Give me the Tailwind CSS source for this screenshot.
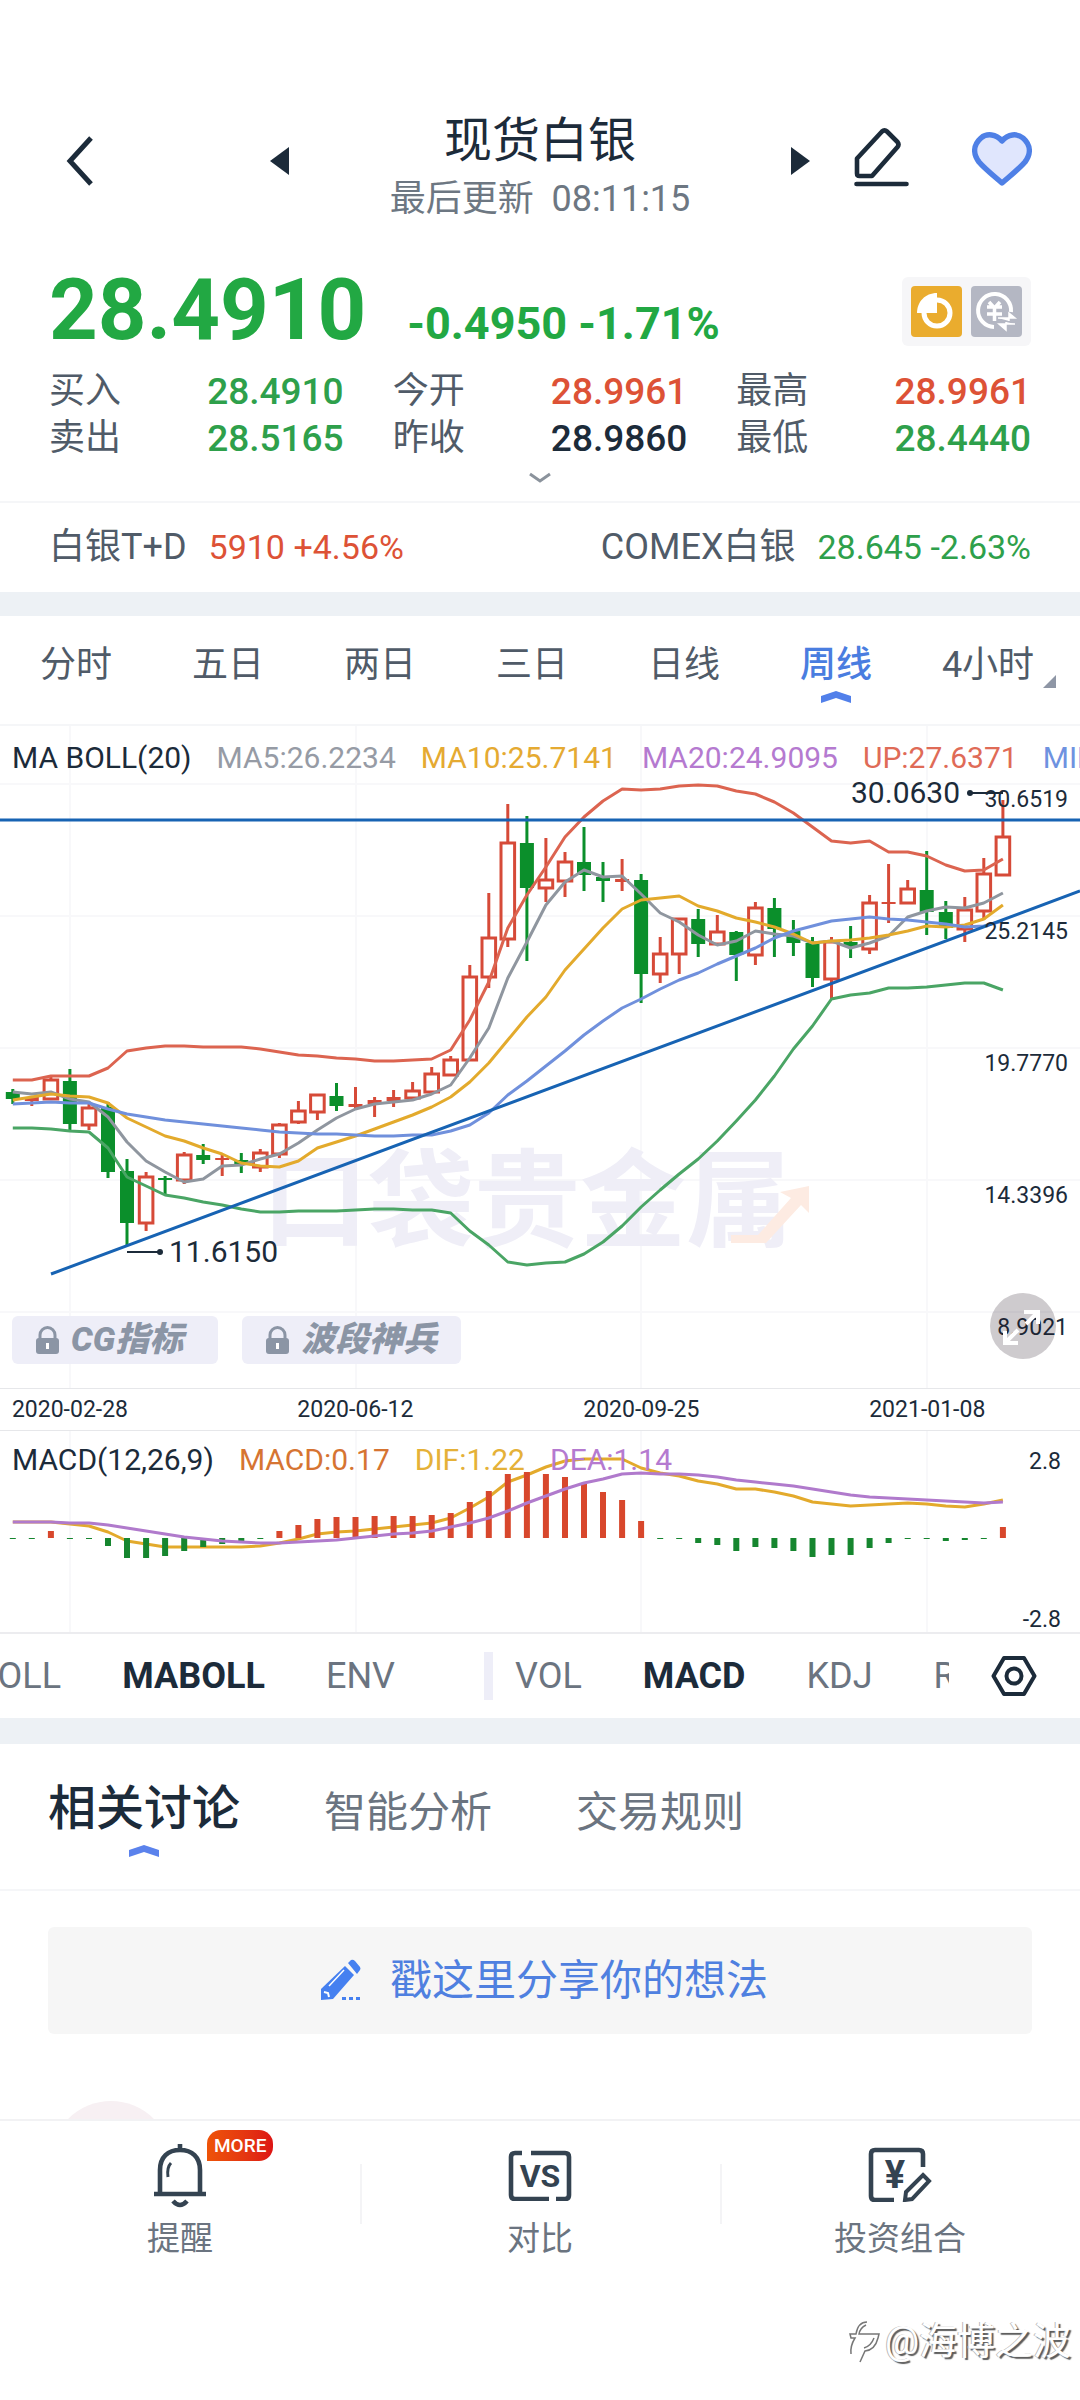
<!DOCTYPE html>
<html lang="zh-CN">
  <head>
    <meta charset="UTF-8" />
    <meta name="viewport" content="width=device-width, initial-scale=1.0" />
    <title>现货白银</title>
    <script src="https://cdn.jsdelivr.net/npm/@tailwindcss/browser@4"></script>
  </head>

  <body
    class="flex min-h-screen flex-col bg-white font-['Roboto','Noto_Sans_CJK_SC',sans-serif] text-[#1c2b3a]"
  >
    <header class="grid grid-cols-[1fr_502px_1fr] items-center pt-[101px]">
      <div class="flex items-center justify-between pl-[64px]">
        <button aria-label="返回">
          <svg class="h-[52px] w-[30px]" viewBox="0 0 30 52" fill="none" stroke="#1c2b3a" stroke-width="5">
            <path d="M27 3 6 26l21 23" />
          </svg>
        </button>
        <button aria-label="上一个">
          <svg class="h-[28px] w-[20px]" viewBox="0 0 20 28" fill="#1c2b3a"><path d="M20 0v28L1 14z" /></svg>
        </button>
      </div>
      <div class="pt-1 text-center">
        <h1 class="text-[48px] leading-[72px]">现货白银</h1>
        <p class="text-[36px] leading-[44px] whitespace-pre text-[#6d7782]">最后更新  08:11:15</p>
      </div>
      <div class="flex items-center">
        <button aria-label="下一个">
          <svg class="h-[28px] w-[20px]" viewBox="0 0 20 28" fill="#1c2b3a"><path d="M0 0v28l19-14z" /></svg>
        </button>
        <button class="mb-[8px] ml-[43px]" aria-label="编辑">
          <svg class="h-[60px] w-[56px]" viewBox="0 0 56 60" fill="none" stroke="#1c2b3a" stroke-width="4.6" stroke-linejoin="round" stroke-linecap="round">
            <path d="M28 4.5Q30.500 2 33 4.500L43.500 15Q45.500 17.500 43.500 20L18 49H5.500Q3 49 3 46.500V31.500Z" />
            <path d="M2.500 57h50" />
          </svg>
        </button>
        <button class="mb-[4px] ml-[62px]" aria-label="自选">
          <svg class="h-[54px] w-[60px]" viewBox="0 0 60 54" fill="#e0e6fd" stroke="#4f80e6" stroke-width="5.500" stroke-linejoin="round">
            <path d="M30 9C24 2 15 1 9 6 1 13 1 22 7 30c6 7 15 14 23 21 8-7 17-14 23-21 6-8 6-17-2-24-6-5-15-4-21 3z" />
          </svg>
        </button>
      </div>
    </header>

    <section class="mt-[45px] px-[49px]">
      <div class="flex items-center justify-between">
        <div class="flex items-baseline gap-[41px] font-bold whitespace-nowrap text-[#22a843]">
          <span class="text-[85px] leading-[88px]">28.4910</span>
          <span class="text-[45px]">-0.4950 -1.71%</span>
        </div>
        <div class="flex gap-[9px] rounded-md bg-[#f6f6f8] px-[9px] py-[9px]">
          <svg class="size-[51px]" viewBox="0 0 51 51">
            <rect width="51" height="51" rx="4" fill="#eaac2e" />
            <circle cx="26" cy="27" r="13" fill="none" stroke="#fff" stroke-width="5" />
            <path d="M26 7v20H6C6 16 14 7 26 7z" fill="#fff" />
          </svg>
          <svg class="size-[51px]" viewBox="0 0 51 51">
            <rect width="51" height="51" rx="4" fill="#b4b7c3" />
            <path d="M23 41A16.500 16.500 0 1 1 40 26" fill="none" stroke="#fff" stroke-width="4" />
            <path d="M16 21h15M16 28h15M23.500 22v13M18 16l5.500 6 5.500-6" fill="none" stroke="#fff" stroke-width="3.500" />
            <path d="M27 32h17l-6-5v8M44 38H28l7 6v-8" fill="#fff" stroke="#fff" stroke-width="1.500" />
          </svg>
        </div>
      </div>

      <dl class="mt-[10px] grid grid-cols-3 gap-x-[49px] text-[36px] leading-[47px]">
        <div class="flex justify-between">
          <dt class="text-[#505b68]">买入</dt>
          <dd class="text-[37px] font-medium text-[#2ea04b]">28.4910</dd>
        </div>
        <div class="flex justify-between">
          <dt class="text-[#505b68]">今开</dt>
          <dd class="text-[37px] font-medium text-[#dd5236]">28.9961</dd>
        </div>
        <div class="flex justify-between">
          <dt class="text-[#505b68]">最高</dt>
          <dd class="text-[37px] font-medium text-[#dd5236]">28.9961</dd>
        </div>
        <div class="flex justify-between">
          <dt class="text-[#505b68]">卖出</dt>
          <dd class="text-[37px] font-medium text-[#2ea04b]">28.5165</dd>
        </div>
        <div class="flex justify-between">
          <dt class="text-[#505b68]">昨收</dt>
          <dd class="text-[37px] font-medium">28.9860</dd>
        </div>
        <div class="flex justify-between">
          <dt class="text-[#505b68]">最低</dt>
          <dd class="text-[37px] font-medium text-[#2ea04b]">28.4440</dd>
        </div>
      </dl>
    </section>
    <button class="flex h-[41px] items-center justify-center border-b-2 border-[#f5f6f8] pb-[6px]" aria-label="展开">
      <svg class="h-[12px] w-[24px]" viewBox="0 0 24 12" fill="none" stroke="#8b939c" stroke-width="3">
        <path d="M2 2l10 7 10-7" />
      </svg>
    </button>

    <section class="flex h-[89px] items-center justify-between px-[49px] text-[36px]">
      <p class="flex items-baseline gap-[22px] text-[#505b68]">
        白银T+D <span class="text-[34px] text-[#dd5236]">5910 +4.56%</span>
      </p>
      <p class="flex items-baseline gap-[22px] text-[#505b68]">
        COMEX白银 <span class="text-[34px] text-[#2ea04b]">28.645 -2.63%</span>
      </p>
    </section>
    <div class="h-[24px] bg-[#edf1f5]"></div>

    <nav class="relative grid h-[110px] grid-cols-7 items-start border-b-2 border-[#f5f6f8] pt-[27px] pr-4 text-[36px] leading-[44px] text-[#505b68]">
      <button>分时</button>
      <button>五日</button>
      <button>两日</button>
      <button>三日</button>
      <button>日线</button>
      <button class="flex flex-col items-center gap-1 font-medium text-[#4a7de0]">
        周线
        <svg class="h-[12px] w-[30px]" viewBox="0 0 30 12" fill="#5280ea"><path d="M0 5 15 0l15 5v7L15 7 0 12z" /></svg>
      </button>
      <button>4小时</button>
      <svg class="absolute right-[24px] bottom-[36px] size-[13px]" viewBox="0 0 13 13" fill="#8e96a5"><path d="M13 0v13H0z" /></svg>
    </nav>

    <section class="relative">
      <svg id="kline" class="block w-full" viewBox="0 0 1080 662" fill="none">
        <g stroke="#f8f8fa" stroke-width="2">
          <path d="M70 0v662M356 0v662M641 0v662M927 0v662" />
          <path d="M0 58h1080M0 190h1080M0 322h1080M0 454h1080M0 586h1080" />
        </g>
        <text x="262" y="512" font-size="106" font-weight="700" fill="#efeef7">口袋贵金属</text>
        <path d="M731 509h27l33-37-11-6 29-6v27l-8-8-35 38h-35z" fill="#fdebe2" />
      </svg>
      <p class="absolute inset-x-0 top-3 flex gap-[25px] overflow-hidden pl-[12px] text-[30px] leading-10 whitespace-nowrap">
        <span>MA BOLL(20)</span>
        <span class="text-[#969ba5]">MA5:26.2234</span>
        <span class="text-[#e5aa32]">MA10:25.7141</span>
        <span class="text-[#b57ad0]">MA20:24.9095</span>
        <span class="text-[#df6b57]">UP:27.6371</span>
        <span class="text-[#6e92e0]">MID:24.9095</span>
      </p>
      <div class="absolute bottom-[24px] left-[12px] flex gap-[24px] text-[34px] font-black text-[#8b95a5] italic">
        <button class="flex h-[48px] min-w-[206px] items-center gap-[12px] rounded-md bg-[#eeeef8] pr-[24px] pl-[24px]">
          <svg class="h-[28px] w-[23px]" viewBox="0 0 23 28">
            <path d="M4 13V9a7.500 7.500 0 0 1 15 0v4" fill="none" stroke="#8b95a5" stroke-width="3" />
            <rect y="12" width="23" height="16" rx="3" fill="#8b95a5" />
            <path d="M11.500 17v6" stroke="#fff" stroke-width="3" />
          </svg>
          CG指标
        </button>
        <button class="flex h-[48px] items-center gap-[12px] rounded-md bg-[#eeeef8] pr-[24px] pl-[24px]">
          <svg class="h-[28px] w-[23px]" viewBox="0 0 23 28">
            <path d="M4 13V9a7.500 7.500 0 0 1 15 0v4" fill="none" stroke="#8b95a5" stroke-width="3" />
            <rect y="12" width="23" height="16" rx="3" fill="#8b95a5" />
            <path d="M11.500 17v6" stroke="#fff" stroke-width="3" />
          </svg>
          波段神兵
        </button>
      </div>
      <button class="absolute right-[24px] bottom-[29px] rounded-full bg-[#201020]/22" aria-label="全屏">
        <svg class="size-[66px]" viewBox="0 0 66 66" fill="none" stroke="#fff" stroke-width="4">
          <path d="M34 19h14v12M47 20 36 31M28 50H15V38M16 49l12-12" />
        </svg>
      </button>
    </section>

    <div class="relative h-[43px] border-y border-[#e6e7ea] text-[23px] leading-[41px]">
      <ul class="grid h-full grid-cols-[12.96%_39.900%_13.050%_39.900%] overflow-hidden whitespace-nowrap">
        <li class="text-center">2020-02-28</li>
        <li class="text-center">2020-06-12</li>
        <li class="text-center">2020-09-25</li>
        <li class="text-center">2021-01-08</li>
      </ul>
    </div>

    <section class="relative border-b-2 border-[#ececef]">
      <svg id="macd" class="block w-full" viewBox="0 0 1080 201" fill="none">
        <path d="M70 0v201M356 0v201M641 0v201M927 0v201" stroke="#f8f8fa" stroke-width="2" />
        <g fill="#1c2b3a" font-size="23" text-anchor="end">
          <text x="1061" y="38">2.8</text>
          <text x="1061" y="196">-2.8</text>
        </g>
      </svg>
      <p class="absolute inset-x-0 top-[9px] flex gap-[25px] overflow-hidden pl-[12px] text-[30px] leading-10 whitespace-nowrap">
        <span>MACD(12,26,9)</span>
        <span class="text-[#d67432]">MACD:0.17</span>
        <span class="text-[#e5b138]">DIF:1.22</span>
        <span class="text-[#b57ad0]">DEA:1.14</span>
      </p>
    </section>

    <section class="flex h-[84px] items-center text-[36px] text-[#6b7480]">
      <div class="flex w-[484px] justify-end gap-[61px] overflow-hidden pr-[89px]">
        <button>BOLL</button>
        <button class="font-bold text-[#1c2b3a]">MABOLL</button>
        <button>ENV</button>
      </div>
      <div class="h-[48px] w-[9px] bg-[#eeeef8]"></div>
      <div class="flex w-[456px] gap-[61px] overflow-hidden pl-[22px]">
        <button>VOL</button>
        <button class="font-bold text-[#1c2b3a]">MACD</button>
        <button>KDJ</button>
        <button>RSI</button>
      </div>
      <button class="ml-auto pr-[43px]" aria-label="指标设置">
        <svg class="h-[40px] w-[46px]" viewBox="0 0 46 40" fill="none" stroke="#1c2b3a" stroke-width="4" stroke-linejoin="round">
          <path d="M13 2h20l10.500 18L33 38H13L2.500 20z" />
          <circle cx="23" cy="20" r="7.500" />
        </svg>
      </button>
    </section>
    <div class="h-[26px] bg-[#edf1f5]"></div>

    <nav class="flex h-[147px] items-start gap-[84px] border-b-2 border-[#f5f6f8] px-[48px] pt-[29px] text-[42px] text-[#6b7480]">
      <button class="flex flex-col items-center text-[48px] leading-[72px] font-medium text-[#1c2b3a]">
        相关讨论
        <svg class="h-[12px] w-[30px]" viewBox="0 0 30 12" fill="#5b82ec"><path d="M0 5 15 0l15 5v7L15 7 0 12z" /></svg>
      </button>
      <button class="leading-[80px]">智能分析</button>
      <button class="leading-[80px]">交易规则</button>
    </nav>

    <main class="px-[48px] pt-[36px]">
      <button class="flex h-[107px] w-full items-center justify-center gap-[28px] rounded-md bg-[#f6f6f6] pl-[8px] text-[42px] text-[#4f80e0]">
        <svg class="h-[42px] w-[42px]" viewBox="0 0 42 42" fill="#4580f0">
          <path d="M25 7 34 16 13 40 1 41V30z" />
          <path d="M28 4 31 1q2-1 4 1l5 6q1 2 0 3l-3 4z" />
          <path d="M9 27 24 11" stroke="#fff" stroke-width="1.500" />
          <path d="M4 33l4 1 1 4" fill="none" stroke="#fff" stroke-width="2" />
          <path d="M22 38h4v3h-4zM29 38h4v3h-4zM36 38h4v3h-4z" />
        </svg>
        戳这里分享你的想法
      </button>
      <div class="mt-[67px] h-[18px] overflow-hidden pl-[3px]">
        <div class="size-[120px] rounded-full bg-[#f7f0f3]"></div>
      </div>
    </main>

    <footer class="relative grid grow grid-cols-3 items-start border-t-2 border-[#f2f2f4] text-[33px] leading-[44px] text-[#6b7480]">
      <button class="relative flex h-[140px] flex-col items-center justify-between pt-[23px]">
        <svg class="h-[64px] w-[54px]" viewBox="0 0 54 64" fill="none" stroke="#344351" stroke-width="4.600">
          <path d="M27 0v6M7 50V26C7 13 15 6 27 6s20 7 20 20v24M1 50h52" />
          <path d="M15 33c-1-7 0-11 3-14" stroke-width="3" />
          <path d="M20 57q7 8 14 0" />
        </svg>
        <span class="absolute top-[9px] left-[57.500%] h-[31px] rounded-[14px] rounded-bl-none bg-linear-to-r from-[#ee5308] to-[#dd1414] px-[7px] text-[19px] leading-[31px] font-medium text-white">MORE</span>
        提醒
      </button>
      <button class="relative flex h-[140px] flex-col items-center justify-between pt-[28px]">
        <span class="absolute top-[43px] left-0 h-[60px] w-[2px] bg-[#f4f4f6]"></span>
        <svg class="h-[52px] w-[64px]" viewBox="0 0 64 52" fill="none" stroke="#344351" stroke-width="4.600">
          <path d="M14 4H7Q3 4 3 8v38q0 4 4 4h34M23 4h34q4 0 4 4v38q0 4-4 4h-9" />
          <text x="32" y="38" text-anchor="middle" font-size="32" font-weight="700" fill="#344351" stroke="none">VS</text>
        </svg>
        对比
      </button>
      <button class="relative flex h-[140px] flex-col items-center justify-between pt-[26px]">
        <span class="absolute top-[43px] left-0 h-[60px] w-[2px] bg-[#f4f4f6]"></span>
        <svg class="h-[55px] w-[64px]" viewBox="0 0 64 55" fill="none" stroke="#344351" stroke-width="4.600">
          <path d="M55 20V7q0-4-4-4H7Q3 3 3 7v42q0 4 4 4h19" />
          <text x="27" y="41" text-anchor="middle" font-size="38" font-weight="700" fill="#344351" stroke="none">¥</text>
          <path d="M55 28l6 6-17 18-7 1 1-8z" stroke-width="4" />
        </svg>
        投资组合
      </button>
      <p class="absolute right-[9px] bottom-[30px] flex items-center text-[38px] leading-[58px] text-white [text-shadow:-1px_0_0_#b9b9b9,2px_2px_1px_#5c5c5c]">
        <svg class="h-[44px] w-[38px]" viewBox="0 0 38 44" fill="none" stroke="#777" stroke-width="1.500">
          <path d="M20 3Q11 3 9 15H3l1 4h4q-5 8-4 16M19 6q-6 3-7 9h20l-1 4q-3 12-13 13L13 43M27 19q-3 8-10 10" />
        </svg>
        @海博之波
      </p>
    </footer>

    <script>
      const NS = "http://www.w3.org/2000/svg";
      const RED = "#d64a38";
      const GREEN = "#0b8f2b";

      // centre of the nth weekly bar
      const barX = (i) => Math.round((12.8 + i * 19.04) * 10) / 10;

      function add(svg, name, attrs, text) {
        const el = document.createElementNS(NS, name);
        Object.entries(attrs).forEach(([key, value]) => el.setAttribute(key, value));
        if (text) el.textContent = text;
        svg.appendChild(el);
      }

      function drawLine(svg, ys, color) {
        const points = ys.map((y, i) => barX(i) + "," + y).join(" ");
        add(svg, "polyline", { points, stroke: color, "stroke-width": 3, "stroke-linejoin": "round" });
      }

      // [up, high, low, body top, body bottom]
      const candles = [
        [0, 363, 378, 366, 373], [1, 370, 380, 371, 375], [1, 350, 374, 354, 373], [0, 343, 404, 355, 398],
        [1, 378, 404, 382, 399], [0, 376, 452, 381, 446], [0, 433, 519, 445, 497], [1, 446, 505, 451, 497],
        [0, 450, 469, 452, 454], [1, 426, 458, 429, 454], [0, 418, 438, 429, 434], [1, 429, 450, 432, 434],
        [0, 427, 447, 434, 438], [1, 423, 446, 427, 441], [1, 397, 432, 399, 428], [1, 375, 398, 385, 396],
        [1, 369, 394, 369, 386], [0, 357, 385, 370, 380], [1, 361, 383, 378, 381], [1, 371, 391, 374, 378],
        [1, 364, 381, 371, 375], [1, 356, 373, 365, 372], [1, 341, 367, 348, 366], [1, 330, 350, 334, 349],
        [1, 239, 334, 251, 334], [1, 167, 262, 212, 251], [1, 78, 221, 117, 213], [0, 90, 235, 117, 162],
        [1, 112, 176, 154, 162], [1, 126, 171, 136, 155], [0, 101, 165, 136, 149], [0, 136, 176, 151, 155],
        [1, 133, 165, 153, 156], [0, 148, 277, 154, 248], [1, 211, 257, 228, 248], [1, 193, 248, 193, 228],
        [0, 183, 231, 193, 218], [1, 189, 218, 206, 218], [0, 205, 255, 206, 229], [1, 176, 239, 182, 229],
        [0, 172, 231, 182, 203], [0, 194, 230, 205, 217], [0, 211, 261, 217, 252], [1, 211, 273, 216, 253],
        [0, 200, 232, 216, 221], [1, 169, 228, 177, 223], [1, 138, 197, 176, 178], [1, 154, 178, 163, 177],
        [0, 125, 209, 164, 186], [0, 175, 213, 186, 202], [1, 171, 216, 184, 203], [1, 132, 194, 148, 185],
        [1, 74, 149, 111, 149],
      ];
      const up = [354, 354, 350, 350, 350, 342, 325, 322, 320, 320, 321, 321, 321, 323, 326, 329, 330, 332, 333, 335, 335, 334, 333, 324, 294, 256, 202, 169, 141, 111, 91, 75, 63, 64, 63, 60, 59, 60, 65, 68, 76, 87, 101, 115, 117, 115, 126, 126, 130, 139, 145, 144, 133];
      const mid = [378, 377, 376, 377, 377, 383, 388, 391, 394, 396, 398, 400, 402, 404, 406, 407, 408, 408, 409, 410, 410, 409, 409, 405, 399, 387, 369, 355, 340, 325, 309, 295, 282, 273, 263, 254, 247, 238, 230, 222, 212, 205, 200, 195, 193, 191, 193, 194, 196, 198, 201, 200, 195];
      const low = [402, 402, 403, 405, 406, 422, 451, 460, 469, 472, 476, 479, 483, 486, 486, 485, 485, 485, 484, 483, 483, 484, 484, 487, 505, 519, 536, 539, 537, 536, 528, 516, 500, 481, 464, 448, 433, 415, 395, 374, 350, 323, 300, 273, 269, 267, 262, 262, 261, 259, 257, 257, 264];
      const ma10 = [374, 371, 368, 370, 371, 377, 392, 401, 410, 415, 422, 428, 437, 440, 441, 435, 422, 416, 410, 403, 396, 389, 381, 371, 356, 337, 314, 291, 271, 244, 223, 202, 183, 174, 172, 170, 180, 185, 192, 196, 201, 208, 217, 215, 214, 212, 209, 205, 200, 201, 199, 193, 179];
      const ma5 = [366, 368, 366, 373, 376, 391, 416, 435, 446, 456, 453, 440, 439, 433, 428, 417, 404, 392, 383, 378, 376, 374, 368, 359, 332, 302, 252, 216, 179, 156, 144, 151, 150, 168, 187, 196, 209, 219, 215, 205, 208, 210, 217, 215, 222, 217, 210, 191, 185, 181, 182, 177, 167];

      const kline = document.getElementById("kline");
      candles.forEach(([isUp, high, bottom, top, base], i) => {
        const x = barX(i);
        const color = isUp ? RED : GREEN;
        const wick = isUp && base - top > 4 ? `M${x} ${high}V${top}M${x} ${base}V${bottom}` : `M${x} ${high}V${bottom}`;
        add(kline, "path", { d: wick, stroke: color, "stroke-width": 3 });
        if (isUp && base - top > 4) {
          add(kline, "rect", { x: x - 6.8, y: top, width: 13.6, height: base - top, stroke: color, "stroke-width": 3 });
        } else {
          add(kline, "rect", { x: x - 7, y: top, width: 14, height: base - top, fill: color });
        }
      });

      drawLine(kline, low, "#4aa565");
      drawLine(kline, ma5, "#8f969f");
      drawLine(kline, ma10, "#e3aa2c");
      drawLine(kline, mid, "#7090dc");
      drawLine(kline, up, "#dc6450");

      // trend lines
      add(kline, "path", { d: "M0 94H1080M51 548 1080 165", stroke: "#1763b3", "stroke-width": 3 });

      // highest and lowest price markers
      add(kline, "path", { d: "M970 67h33M127 526h33", stroke: "#1c2b3a", "stroke-width": 2 });
      add(kline, "circle", { cx: 970, cy: 67, r: 3, fill: "#1c2b3a" });
      add(kline, "circle", { cx: 160, cy: 526, r: 3, fill: "#1c2b3a" });
      add(kline, "text", { x: 851, y: 77, "font-size": 30, fill: "#1c2b3a" }, "30.0630");
      add(kline, "text", { x: 169, y: 536, "font-size": 30, fill: "#1c2b3a" }, "11.6150");

      ["30.6519", "25.2145", "19.7770", "14.3396", "8.9021"].forEach((label, i) => {
        add(kline, "text", { x: 1068, y: 81 + i * 132, "font-size": 23, "text-anchor": "end", fill: "#1c2b3a" }, label);
      });

      const hist = [0, 0, 7, 0, 0, -8, -20, -20, -18, -13, -9, -6, -4, 0, 7, 13, 19, 21, 21, 22, 22, 22, 23, 25, 36, 47, 64, 66, 64, 61, 54, 46, 38, 17, 0, 0, -5, -7, -13, -9, -10, -13, -19, -17, -17, -10, -5, 0, 0, -3, -2, 0, 11];
      const dif = [91, 91, 91, 93, 95, 101, 110, 113, 116, 116, 116, 116, 116, 115, 112, 108, 103, 101, 100, 98, 96, 94, 92, 87, 77, 66, 51, 44, 36, 30, 28, 28, 28, 37, 42, 45, 50, 53, 58, 58, 61, 65, 71, 73, 75, 74, 73, 72, 73, 75, 76, 73, 69];
      const dea = [91, 91, 91, 92, 92, 94, 97, 100, 103, 106, 108, 110, 111, 112, 112, 111, 110, 109, 107, 105, 103, 102, 100, 96, 92, 87, 80, 72, 65, 58, 52, 48, 43, 42, 43, 43, 44, 46, 49, 51, 53, 55, 58, 61, 64, 66, 67, 68, 69, 70, 71, 72, 71];

      const macd = document.getElementById("macd");
      drawLine(macd, dif, "#e3aa2c");
      hist.forEach((value, i) => {
        add(macd, "rect", {
          x: barX(i) - 3,
          y: 107 - Math.max(value, 0),
          width: 6,
          height: Math.abs(value) || 1,
          fill: value > 0 ? "#d8472c" : "#16862f",
        });
      });
      drawLine(macd, dea, "#b07acc");
    </script>
  </body>
</html>
